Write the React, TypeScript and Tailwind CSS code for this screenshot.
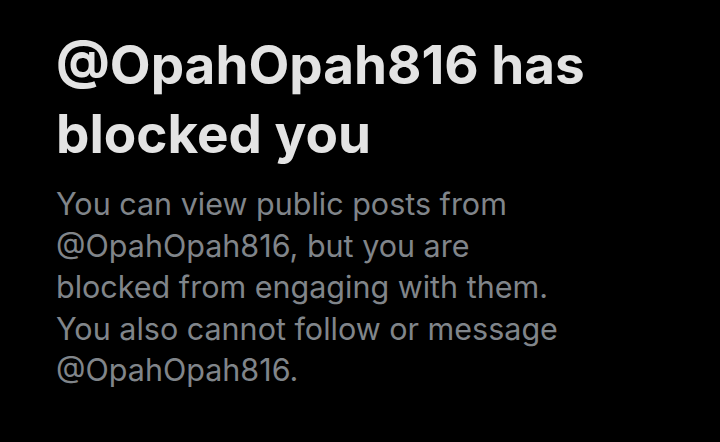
export default function App() {
  return (
    <div className="w-[720px] h-[442px] bg-black overflow-hidden" style={{ fontFamily: "Inter, 'Noto Sans', sans-serif" }}>
      <div className="pl-[56px] pr-[20px] pt-[31px]">
        <h1 className="text-[53px] leading-[69px] font-bold text-[#e3e3e3] whitespace-nowrap">
          @OpahOpah816 has
          <br />
          blocked you
        </h1>
        <p className="mt-[14px] text-[30.5px] leading-[41.5px] text-[#80858a] whitespace-nowrap">
          You can view public posts from
          <br />
          @OpahOpah816, but you are
          <br />
          blocked from engaging with them.
          <br />
          You also cannot follow or message
          <br />
          @OpahOpah816.
        </p>
      </div>
    </div>
  );
}
